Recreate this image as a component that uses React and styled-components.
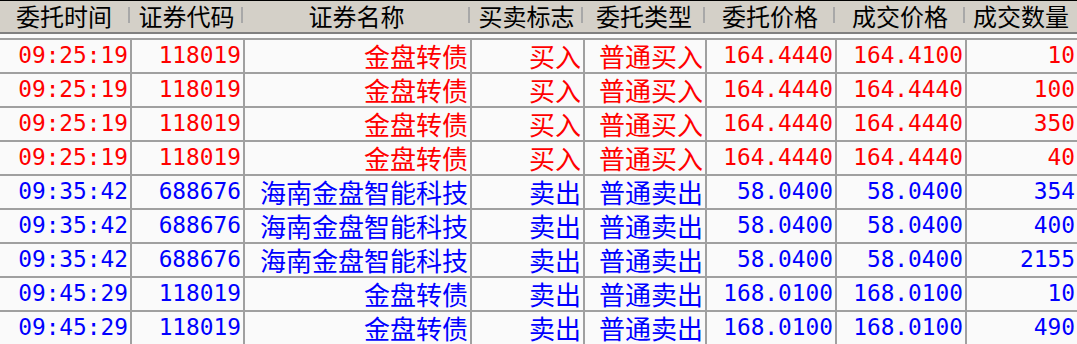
import React from 'react';
import styled, { createGlobalStyle } from 'styled-components';

const GlobalStyle = createGlobalStyle`
  html, body { margin: 0; padding: 0; overflow: hidden; background: #fafafa; }
  * { box-sizing: border-box; }
`;

const COLS = '132px 113px 227px 113px 122px 130px 130px 1fr';

const Table = styled.div`
  width: 1077px;
  height: 344px;
  overflow: hidden;
  background: #fafafa;
`;

const HeaderRow = styled.div`
  display: grid;
  grid-template-columns: ${COLS};
  height: 34px;
  background: #d4d0c8;
  border-top: 1px solid #000;
  border-bottom: 2px solid #808080;
`;

const HeadCell = styled.div`
  display: flex;
  align-items: center;
  padding-right: 2px;
`;

const HeadLabel = styled.span`
  flex: 1;
  text-align: center;
  font-family: "Noto Sans CJK SC", sans-serif;
  font-size: 24px;
  color: #000;
  line-height: 1.2;
  white-space: nowrap;
`;

const HeadSep = styled.span`
  flex: none;
  width: 2px;
  height: 16px;
  margin-top: -4px;
  background: #a8a8a8;
`;

const Body = styled.div`
  padding-top: 4px;
`;

const Grid = styled.div`
  border-top: 2px solid #a0a0a0;
`;

const Row = styled.div`
  display: grid;
  grid-template-columns: ${COLS};
  height: 34px;
  border-bottom: 2px solid #a0a0a0;
  color: ${p => (p.$sell ? '#0000ff' : '#ff0000')};
`;

const Cell = styled.div`
  display: flex;
  align-items: center;
  justify-content: flex-end;
  min-width: 0;
  padding-right: 2px;
  border-right: ${p => (p.$last ? 'none' : '2px solid #a0a0a0')};
  white-space: nowrap;
  font-family: ${p => (p.$num ? '"DejaVu Sans Mono", "Liberation Mono", monospace' : '"Noto Sans CJK SC", sans-serif')};
  font-size: ${p => (p.$num ? '22.8px' : '26px')};
  line-height: 1.2;
`;

const headers = ['委托时间', '证券代码', '证券名称', '买卖标志', '委托类型', '委托价格', '成交价格', '成交数量'];

const rows = [
  ['09:25:19', '118019', '金盘转债', '买入', '普通买入', '164.4440', '164.4100', '10', false],
  ['09:25:19', '118019', '金盘转债', '买入', '普通买入', '164.4440', '164.4440', '100', false],
  ['09:25:19', '118019', '金盘转债', '买入', '普通买入', '164.4440', '164.4440', '350', false],
  ['09:25:19', '118019', '金盘转债', '买入', '普通买入', '164.4440', '164.4440', '40', false],
  ['09:35:42', '688676', '海南金盘智能科技', '卖出', '普通卖出', '58.0400', '58.0400', '354', true],
  ['09:35:42', '688676', '海南金盘智能科技', '卖出', '普通卖出', '58.0400', '58.0400', '400', true],
  ['09:35:42', '688676', '海南金盘智能科技', '卖出', '普通卖出', '58.0400', '58.0400', '2155', true],
  ['09:45:29', '118019', '金盘转债', '卖出', '普通卖出', '168.0100', '168.0100', '10', true],
  ['09:45:29', '118019', '金盘转债', '卖出', '普通卖出', '168.0100', '168.0100', '490', true],
];

// which columns hold numbers (monospace digits)
const numCols = [true, true, false, false, false, true, true, true];

export default function App() {
  return (
    <>
      <GlobalStyle />
      <Table>
        <HeaderRow>
          {headers.map((h, i) => (
            <HeadCell key={h}>
              <HeadLabel>{h}</HeadLabel>
              {i < headers.length - 1 && <HeadSep />}
            </HeadCell>
          ))}
        </HeaderRow>
        <Body>
          <Grid>
            {rows.map((r, ri) => (
              <Row key={ri} $sell={r[8]}>
                {r.slice(0, 8).map((v, ci) => (
                  <Cell key={ci} $num={numCols[ci]} $last={ci === 7}>{v}</Cell>
                ))}
              </Row>
            ))}
          </Grid>
        </Body>
      </Table>
    </>
  );
}
